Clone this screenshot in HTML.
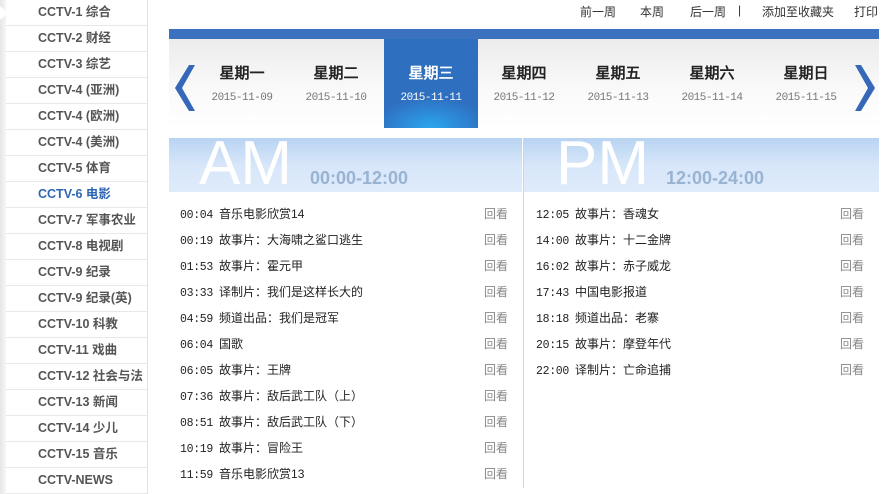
<!DOCTYPE html>
<html><head><meta charset="utf-8">
<style>
*{margin:0;padding:0;box-sizing:border-box}
body{width:895px;height:494px;overflow:hidden;background:#fff;font-family:"Liberation Sans","Noto Sans CJK SC",sans-serif;font-size:12px;color:#333;position:relative}
#side{position:absolute;left:0;top:0;width:148px;height:494px;border-right:1px solid #e2e2e2;background:#fff}
#side:before{content:"";position:absolute;left:0;top:0;width:6px;height:494px;background:linear-gradient(to right,#e6e6e6,#f6f6f6)}
#side div{position:relative;height:26px;line-height:25px;border-bottom:1px solid #e8e8e8;font-weight:bold;font-size:12.5px;color:#555;margin-left:6px;padding-left:32px}
#side div.on{color:#2f66b3}
#notch{position:absolute;left:0;top:6px;width:0;height:0;border-top:7px solid transparent;border-bottom:7px solid transparent;border-left:8px solid #fff;z-index:2}
#top{position:absolute;top:3px;left:0;width:895px;height:16px;font-size:12px;color:#333}
#top span{position:absolute;white-space:nowrap}
#bar{position:absolute;left:169px;top:29px;width:710px;height:10px;background:#3b72c0}
#tabs{position:absolute;left:169px;top:39px;width:710px;height:89px;background:linear-gradient(#ececec,#fafafa 60%,#fff)}
.tab{position:absolute;top:0;width:94px;height:89px;text-align:center}
.tab b{display:block;margin-top:23px;font-size:15px;color:#222;font-family:"Liberation Sans","WenQuanYi Zen Hei",sans-serif}
.tab i{display:block;font-style:normal;font-size:11px;color:#777;margin-top:9px;font-family:"Liberation Mono","DejaVu Sans Mono",monospace;letter-spacing:-0.5px}
.tab.on{background:radial-gradient(ellipse 60% 35% at 50% 100%,#2aa6f0,#2f6fc0 100%);background-color:#3070c0}
.tab.on b,.tab.on i{color:#fff}
.band{position:absolute;top:138px;height:54px;background:linear-gradient(#b8d4f2,#d7e6f9 50%,#deebfb);overflow:hidden}
.band .big{position:absolute;top:-10px;font-size:62px;color:#fff;font-family:"Liberation Sans",sans-serif}
.band .rng{position:absolute;top:30px;font-size:18px;font-weight:bold;color:#99b3d3}
#div{position:absolute;left:523px;top:138px;width:1px;height:350px;background:#d4d4d4}
.list{position:absolute;top:201px}
.row{height:26px;line-height:26px;font-size:12px;color:#222;position:relative;white-space:nowrap}
.row .t{font-family:"Liberation Mono","DejaVu Sans Mono",monospace;font-size:11.5px;letter-spacing:-0.3px;margin-right:6px}
.row .r{position:absolute;right:0;top:0;color:#888}
</style></head><body>
<div id="side"><span id="notch"></span>
<div>CCTV-1 综合</div><div>CCTV-2 财经</div><div>CCTV-3 综艺</div><div>CCTV-4 (亚洲)</div><div>CCTV-4 (欧洲)</div><div>CCTV-4 (美洲)</div><div>CCTV-5 体育</div><div class="on">CCTV-6 电影</div><div>CCTV-7 军事农业</div><div>CCTV-8 电视剧</div><div>CCTV-9 纪录</div><div>CCTV-9 纪录(英)</div><div>CCTV-10 科教</div><div>CCTV-11 戏曲</div><div>CCTV-12 社会与法</div><div>CCTV-13 新闻</div><div>CCTV-14 少儿</div><div>CCTV-15 音乐</div><div>CCTV-NEWS</div>
</div>
<div id="top"><span style="left:580px">前一周</span><span style="left:640px">本周</span><span style="left:690px">后一周</span><span style="left:738px">|</span><span style="left:762px">添加至收藏夹</span><span style="left:854px">打印</span></div>
<div id="bar"></div>
<div id="tabs">
<svg style="position:absolute;left:6px;top:26px" width="22" height="46" viewBox="0 0 22 46"><path d="M20 0 L7 23 L20 46 L14 46 L0 23 L14 0 Z" fill="#3568b8"/></svg>
<div class="tab" style="left:26px"><b>星期一</b><i>2015-11-09</i></div>
<div class="tab" style="left:120px"><b>星期二</b><i>2015-11-10</i></div>
<div class="tab on" style="left:215px"><b>星期三</b><i>2015-11-11</i></div>
<div class="tab" style="left:308px"><b>星期四</b><i>2015-11-12</i></div>
<div class="tab" style="left:402px"><b>星期五</b><i>2015-11-13</i></div>
<div class="tab" style="left:496px"><b>星期六</b><i>2015-11-14</i></div>
<div class="tab" style="left:590px"><b>星期日</b><i>2015-11-15</i></div>
<svg style="position:absolute;left:684px;top:26px" width="22" height="46" viewBox="0 0 22 46"><path d="M2 0 L15 23 L2 46 L8 46 L22 23 L8 0 Z" fill="#3568b8"/></svg>
</div>
<div class="band" style="left:169px;width:353px"><span class="big" style="left:30px">AM</span><span class="rng" style="left:141px">00:00-12:00</span></div>
<div class="band" style="left:524px;width:355px"><span class="big" style="left:32px">PM</span><span class="rng" style="left:142px">12:00-24:00</span></div>
<div id="div"></div>
<div class="list" style="left:180px;width:328px">
<div class="row"><span class="t">00:04</span>音乐电影欣赏14<span class="r">回看</span></div>
<div class="row"><span class="t">00:19</span>故事片：大海啸之鲨口逃生<span class="r">回看</span></div>
<div class="row"><span class="t">01:53</span>故事片：霍元甲<span class="r">回看</span></div>
<div class="row"><span class="t">03:33</span>译制片：我们是这样长大的<span class="r">回看</span></div>
<div class="row"><span class="t">04:59</span>频道出品：我们是冠军<span class="r">回看</span></div>
<div class="row"><span class="t">06:04</span>国歌<span class="r">回看</span></div>
<div class="row"><span class="t">06:05</span>故事片：王牌<span class="r">回看</span></div>
<div class="row"><span class="t">07:36</span>故事片：敌后武工队（上）<span class="r">回看</span></div>
<div class="row"><span class="t">08:51</span>故事片：敌后武工队（下）<span class="r">回看</span></div>
<div class="row"><span class="t">10:19</span>故事片：冒险王<span class="r">回看</span></div>
<div class="row"><span class="t">11:59</span>音乐电影欣赏13<span class="r">回看</span></div>
</div>
<div class="list" style="left:536px;width:328px">
<div class="row"><span class="t">12:05</span>故事片：香魂女<span class="r">回看</span></div>
<div class="row"><span class="t">14:00</span>故事片：十二金牌<span class="r">回看</span></div>
<div class="row"><span class="t">16:02</span>故事片：赤子威龙<span class="r">回看</span></div>
<div class="row"><span class="t">17:43</span>中国电影报道<span class="r">回看</span></div>
<div class="row"><span class="t">18:18</span>频道出品：老寨<span class="r">回看</span></div>
<div class="row"><span class="t">20:15</span>故事片：摩登年代<span class="r">回看</span></div>
<div class="row"><span class="t">22:00</span>译制片：亡命追捕<span class="r">回看</span></div>
</div>
</body></html>
